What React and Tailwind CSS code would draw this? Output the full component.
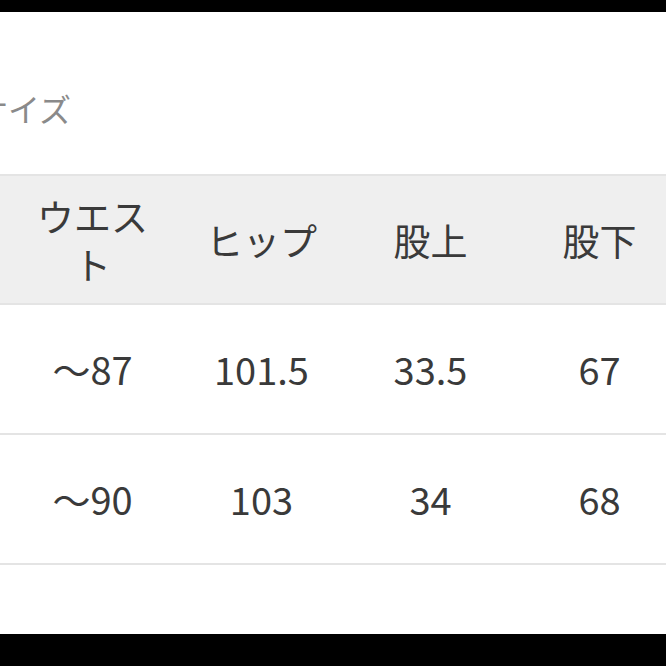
const headers = [['ウエス', 'ト'], ['ヒップ'], ['股上'], ['股下']];

const rows = [
  ['～87', '101.5', '33.5', '67'],
  ['～90', '103', '34', '68'],
];

const font = { fontFamily: '"Noto Sans CJK JP", "Noto Sans", sans-serif' };

export default function App() {
  return (
    <div className="flex h-[666px] w-[666px] flex-col overflow-hidden bg-black" style={font}>
      <div className="h-[12px] shrink-0" />
      <div className="h-[622px] shrink-0 overflow-hidden bg-white">
        <div className="ml-[-24px] mt-[72px] h-[48px] text-[32px] leading-[48px] text-[#8a8a8a]">サイズ</div>
        <div className="mt-[42px] w-[700px]">
          <div className="grid h-[131px] grid-cols-[8px_169px_169px_169px_169px] items-center border-y-2 border-[#e4e4e4] bg-[#efefef] text-[37px] leading-[48px] text-[#3a3a3a]">
            <div />
            {headers.map((lines) => (
              <div key={lines.join('')} className="flex flex-col items-center">
                {lines.map((line) => (
                  <span key={line}>{line}</span>
                ))}
              </div>
            ))}
          </div>
          {rows.map((row) => (
            <div
              key={row[0]}
              className="grid h-[130px] grid-cols-[8px_169px_169px_169px_169px] items-center border-b-2 border-[#e4e4e4] text-[38px] leading-[48px] text-[#3a3a3a]"
            >
              <div />
              {row.map((cell) => (
                <div key={cell} className="text-center">
                  {cell}
                </div>
              ))}
            </div>
          ))}
        </div>
      </div>
    </div>
  );
}
